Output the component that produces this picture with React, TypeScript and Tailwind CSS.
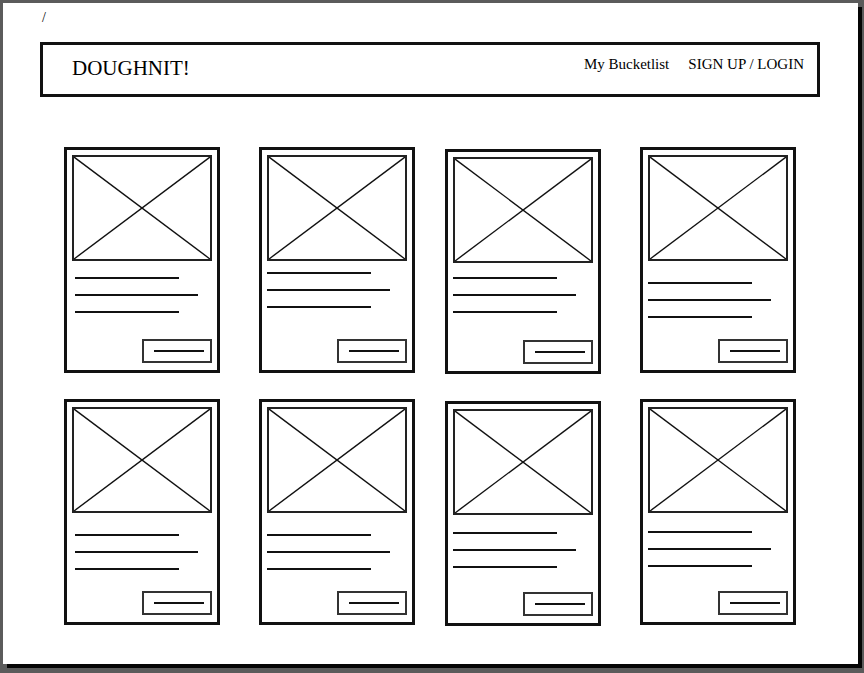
import React from "react";

type CardSpec = {
  top: string;
  lines: string;
  h: string;
  pl: string;
};

const row1: CardSpec[] = [
  { top: "mt-0", lines: "mt-[16px]", h: "h-[226px]", pl: "pl-[3px]" },
  { top: "mt-0", lines: "mt-[11px]", h: "h-[226px]", pl: "pl-0" },
  { top: "mt-[2px]", lines: "mt-[14px]", h: "h-[225px]", pl: "pl-0" },
  { top: "mt-0", lines: "mt-[21px]", h: "h-[226px]", pl: "pl-0" },
];

const row2: CardSpec[] = [
  { top: "mt-0", lines: "mt-[21px]", h: "h-[226px]", pl: "pl-[3px]" },
  { top: "mt-0", lines: "mt-[21px]", h: "h-[226px]", pl: "pl-0" },
  { top: "mt-[2px]", lines: "mt-[17px]", h: "h-[225px]", pl: "pl-0" },
  { top: "mt-0", lines: "mt-[18px]", h: "h-[226px]", pl: "pl-0" },
];

const gaps = ["ml-0", "ml-[39px]", "ml-[30px]", "ml-[39px]"];

function Card({ spec, gap }: { spec: CardSpec; gap: string }) {
  return (
    <div
      className={`${gap} ${spec.top} ${spec.h} w-[156px] border-[3px] border-[#111] bg-white flex flex-col px-[5px] pt-[5px] pb-[7px]`}
    >
      <div className="relative w-[140px] h-[106px] border-2 border-[#222]">
        <svg
          className="absolute inset-0 w-full h-full"
          viewBox="0 0 136 102"
          preserveAspectRatio="none"
        >
          <line x1="0" y1="0" x2="136" y2="102" stroke="#111" strokeWidth="1.4" />
          <line x1="136" y1="0" x2="0" y2="102" stroke="#111" strokeWidth="1.4" />
        </svg>
      </div>
      <div className={`${spec.lines} ${spec.pl} flex flex-col gap-[15px]`}>
        <div className="w-[104px] h-[2px] bg-[#111]" />
        <div className="w-[123px] h-[2px] bg-[#111]" />
        <div className="w-[104px] h-[2px] bg-[#111]" />
      </div>
      <div className="mt-auto self-end w-[70px] h-[24px] border-2 border-[#333] flex items-center justify-center">
        <div className="w-[50px] h-[2px] bg-[#111] ml-[4px]" />
      </div>
    </div>
  );
}

export default function App() {
  return (
    <div className="w-[864px] h-[673px] bg-[#5b5b5b] pt-[3px] pl-[3px] overflow-hidden">
      <div
        className="w-[855px] h-[661px] bg-white shadow-[4px_4px_0_#050505] flex flex-col text-black"
        style={{ fontFamily: '"Liberation Serif", "DejaVu Serif", serif' }}
      >
        <div className="pt-[8px] pl-[39px] text-[14px] leading-none h-[21px]">/</div>
        <div className="mt-[18px] ml-[37px] w-[780px] h-[55px] border-[3px] border-[#111] flex items-start justify-between">
          <div className="pt-[13px] pl-[29px] text-[21px] leading-none">DOUGHNIT!</div>
          <div className="pt-[12px] pr-[13px] text-[15px] leading-none flex gap-[19px]">
            <span>My Bucketlist</span>
            <span>SIGN UP / LOGIN</span>
          </div>
        </div>
        <div className="mt-[50px] pl-[61px] flex items-start">
          {row1.map((s, i) => (
            <Card key={i} spec={s} gap={gaps[i]} />
          ))}
        </div>
        <div className="mt-[25px] pl-[61px] flex items-start">
          {row2.map((s, i) => (
            <Card key={i} spec={s} gap={gaps[i]} />
          ))}
        </div>
      </div>
    </div>
  );
}
